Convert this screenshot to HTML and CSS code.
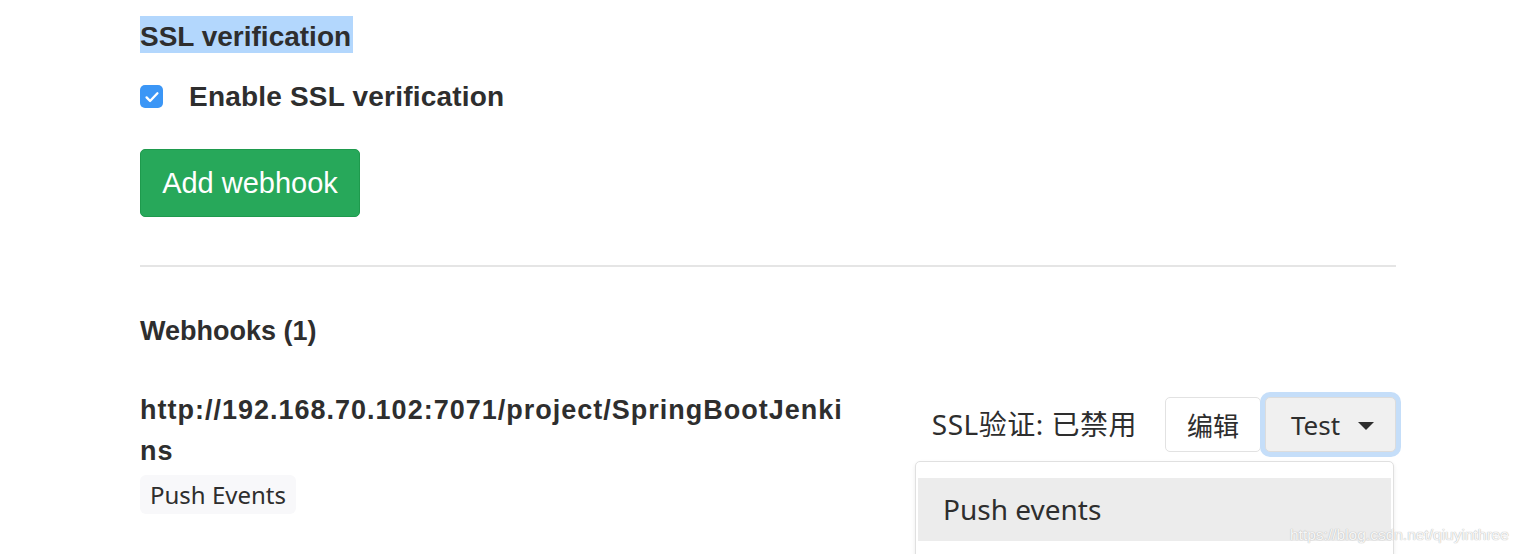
FILE: index.html
```html
<!DOCTYPE html>
<html>
<head>
<meta charset="utf-8">
<link rel="stylesheet" href="styles.css">
</head>
<body>
<div class="page">
  <div class="ssl-section">
    <h4 class="section-title"><span class="selected">SSL verification</span></h4>
    <label class="check-row">
      <span class="checkbox">
        <svg viewBox="0 0 24 24" width="20" height="20"><path d="M5.5 12.5l4.2 4.3L18.5 7.5" fill="none" stroke="#fff" stroke-width="2.8" stroke-linecap="round" stroke-linejoin="round"/></svg>
      </span>
      <span class="check-label">Enable SSL verification</span>
    </label>
    <button class="btn-create">Add webhook</button>
  </div>
  <hr class="divider">
  <h5 class="list-title">Webhooks (1)</h5>
  <div class="hook-row">
    <div class="hook-info">
      <div class="hook-url">http://192.168.70.102:7071/project/SpringBootJenkins</div>
      <div class="badges"><span class="badge">Push Events</span></div>
    </div>
    <div class="hook-actions">
      <span class="ssl-status">SSL验证: 已禁用</span>
      <button class="btn-edit">编辑</button>
      <div class="dropdown">
        <button class="btn-test">Test <span class="caret"></span></button>
        <div class="dropdown-menu">
          <div class="menu-item active">Push events</div>
        </div>
      </div>
    </div>
  </div>
</div>
<div class="watermark">https://blog.csdn.net/qiuyinthree</div>
</body>
</html>
```

FILE: styles.css
```css
html, body {
  margin: 0;
  padding: 0;
  background: #fff;
  overflow: hidden;
}
body {
  width: 1524px;
  height: 554px;
  position: relative;
  font-family: "Liberation Sans", Arial, "Noto Sans CJK SC", sans-serif;
  color: #2e2e2e;
}
.page {
  padding: 16px 128px 0 140px;
}
.section-title {
  margin: 0;
  font-size: 28px;
  font-weight: bold;
  line-height: 32px;
}
.selected {
  background: #b3d7fd;
  display: inline-block;
  padding-top: 5px;
  padding-right: 2px;
}
.check-row {
  display: flex;
  align-items: center;
  margin-top: 32px;
  height: 23px;
}
.checkbox {
  width: 23px;
  height: 23px;
  border-radius: 5px;
  background: #3b96f6;
  display: flex;
  align-items: center;
  justify-content: center;
}
.check-label {
  margin-left: 26px;
  font-size: 28px;
  font-weight: bold;
  letter-spacing: 0.2px;
}
.btn-create {
  margin-top: 41px;
  display: block;
  width: 220px;
  height: 68px;
  background: #27a85a;
  border: 1px solid #1e9a4d;
  border-radius: 5px;
  color: #fff;
  font-family: "Liberation Sans", Arial, sans-serif;
  font-size: 29px;
  padding: 0;
}
.divider {
  margin: 48px 0 0 0;
  border: 0;
  border-top: 2px solid #e5e5e5;
}
.list-title {
  margin: 47px 0 0 0;
  font-size: 27px;
  font-weight: bold;
  line-height: 34px;
}
.hook-row {
  display: flex;
  justify-content: space-between;
  margin-top: 42px;
}
.hook-info {
  width: 712px;
}
.hook-url {
  font-size: 27px;
  font-weight: bold;
  line-height: 41px;
  letter-spacing: 1px;
  word-break: break-all;
}
.badges {
  margin-top: 3px;
}
.badge {
  display: inline-block;
  background: #f8f8fa;
  border-radius: 6px;
  padding: 0 10px;
  height: 39px;
  line-height: 39px;
  font-family: "Noto Sans", "Liberation Sans", sans-serif;
  font-size: 24px;
}
.hook-actions {
  display: flex;
  align-items: flex-start;
  padding-top: 7px;
}
.ssl-status {
  font-family: "Noto Sans", "Noto Sans CJK SC", sans-serif;
  font-size: 28px;
  line-height: 54px;
  margin-right: 28px;
  letter-spacing: 0.5px;
}
.btn-edit {
  width: 96px;
  height: 55px;
  background: #fff;
  border: 1px solid #e2e2e2;
  border-radius: 5px;
  font-family: "Noto Sans CJK SC", sans-serif;
  font-size: 26px;
  color: #2e2e2e;
  padding: 0;
  margin-right: 4px;
}
.dropdown {
  position: relative;
}
.btn-test {
  width: 131px;
  height: 55px;
  background: #f0f0f0;
  border: 1px solid #dcdcdc;
  border-radius: 5px;
  box-shadow: 0 0 0 5px #c5def9;
  font-family: "Noto Sans", sans-serif;
  font-size: 26px;
  color: #2e2e2e;
  padding: 0 0 0 4px;
  display: flex;
  align-items: center;
  justify-content: center;
  gap: 18px;
}
.caret {
  width: 0;
  height: 0;
  border-left: 8px solid transparent;
  border-right: 8px solid transparent;
  border-top: 8px solid #2e2e2e;
  margin-top: 2px;
}
.dropdown-menu {
  position: absolute;
  top: 64px;
  right: 2px;
  width: 479px;
  height: 120px;
  background: #fff;
  border: 1px solid #e0e0e0;
  border-radius: 5px;
  box-shadow: 0 2px 4px rgba(0,0,0,0.08);
  padding-top: 16px;
  box-sizing: border-box;
}
.menu-item {
  margin: 0 2px;
  height: 63px;
  line-height: 63px;
  padding-left: 25px;
  font-family: "Noto Sans", sans-serif;
  font-size: 28px;
  color: #2e2e2e;
}
.menu-item.active {
  background: #ececec;
}
.watermark {
  position: absolute;
  left: 1290px;
  top: 526px;
  font-family: "Liberation Sans", Arial, sans-serif;
  font-size: 15.5px;
  color: rgba(255,255,255,0.9);
  text-shadow: 0 0 1px #bbb, 0 0 1px #bbb;
}
```
